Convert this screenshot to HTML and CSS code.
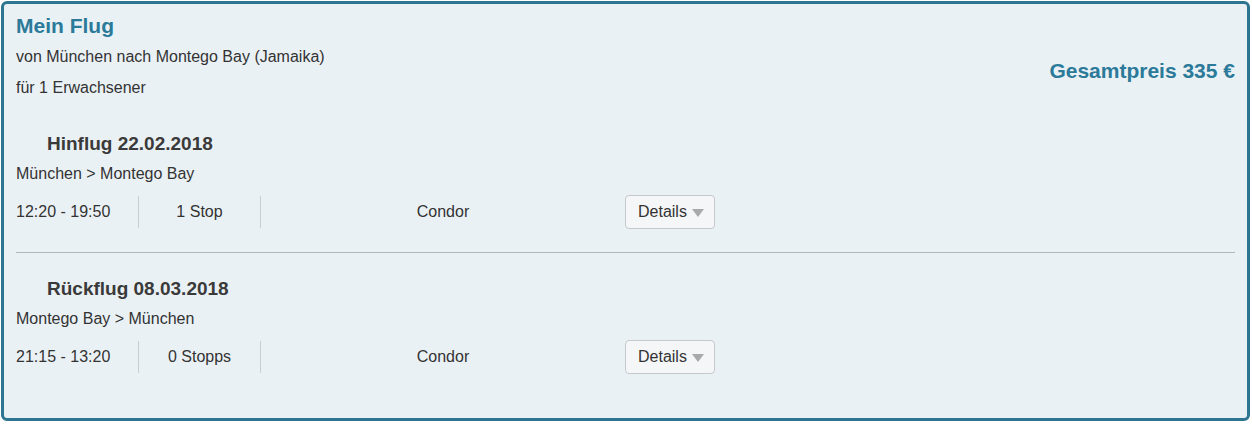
FILE: index.html
```html
<!DOCTYPE html>
<html lang="de">
<head>
<meta charset="utf-8">
<title>Mein Flug</title>
<link rel="stylesheet" href="styles.css">
</head>
<body>
<div class="card">
  <div class="header">
    <div class="header-info">
      <h1 class="title">Mein Flug</h1>
      <p class="sub">von München nach Montego Bay (Jamaika)</p>
      <p class="sub">für 1 Erwachsener</p>
    </div>
    <div class="price">Gesamtpreis 335 €</div>
  </div>

  <div class="flight">
    <h2 class="flight-title">Hinflug 22.02.2018</h2>
    <div class="route">München &gt; Montego Bay</div>
    <div class="row">
      <div class="cell cell-time">12:20 - 19:50</div>
      <div class="cell cell-stops">1 Stop</div>
      <div class="cell cell-airline">Condor</div>
      <button class="details">Details <span class="caret"></span></button>
    </div>
  </div>

  <hr class="divider">

  <div class="flight">
    <h2 class="flight-title">Rückflug 08.03.2018</h2>
    <div class="route">Montego Bay &gt; München</div>
    <div class="row">
      <div class="cell cell-time">21:15 - 13:20</div>
      <div class="cell cell-stops">0 Stopps</div>
      <div class="cell cell-airline">Condor</div>
      <button class="details">Details <span class="caret"></span></button>
    </div>
  </div>
</div>
</body>
</html>
```

FILE: styles.css
```css
html, body {
  margin: 0;
  padding: 0;
  background: #ffffff;
}

body {
  font-family: "Liberation Sans", Arial, sans-serif;
  color: #333333;
  padding: 1px 2px 0 1px;
}

.card {
  box-sizing: border-box;
  width: 1249px;
  height: 420px;
  border: 3px solid #2d7590;
  border-radius: 6px;
  background: #eaf1f5;
  padding: 0 12px 20px;
}

.header {
  display: flex;
  justify-content: space-between;
  align-items: flex-start;
  padding-top: 10px;
  margin-bottom: 5px;
}

.title {
  margin: 0 0 3px;
  font-size: 21px;
  line-height: 24px;
  font-weight: bold;
  color: #2b7a99;
}

.sub {
  margin: 0;
  font-size: 16px;
  line-height: 31px;
  color: #333333;
}

.price {
  margin-top: 45px;
  font-size: 21px;
  line-height: 24px;
  font-weight: bold;
  color: #2b7a99;
}

.flight {
  padding: 24px 0 23px;
}

.flight-title {
  margin: 0;
  padding-left: 31px;
  font-size: 19px;
  line-height: 24px;
  font-weight: bold;
  color: #3a3a3a;
}

.route {
  margin-top: 8px;
  font-size: 16px;
  line-height: 20px;
}

.row {
  display: flex;
  align-items: center;
  margin-top: 11px;
  height: 34px;
}

.cell {
  box-sizing: border-box;
  height: 32px;
  line-height: 32px;
  font-size: 16px;
}

.cell-time {
  width: 122px;
}

.cell-stops {
  width: 123px;
  text-align: center;
  border-left: 1px solid #c9ced1;
  border-right: 1px solid #c9ced1;
}

.cell-airline {
  width: 364px;
  text-align: center;
}

.details {
  box-sizing: border-box;
  width: 90px;
  height: 34px;
  padding: 0 0 0 12px;
  display: flex;
  align-items: center;
  gap: 5px;
  border: 1px solid #c6c9cb;
  border-radius: 4px;
  background: #f5f6f7;
  font-family: "Liberation Sans", Arial, sans-serif;
  font-size: 16px;
  color: #333333;
}

.caret {
  width: 0;
  height: 0;
  border-left: 6px solid transparent;
  border-right: 6px solid transparent;
  border-top: 8px solid #a9a9a9;
  margin-top: 1px;
}

.divider {
  margin: 0;
  border: 0;
  border-top: 1px solid #b4b6b8;
}
```
